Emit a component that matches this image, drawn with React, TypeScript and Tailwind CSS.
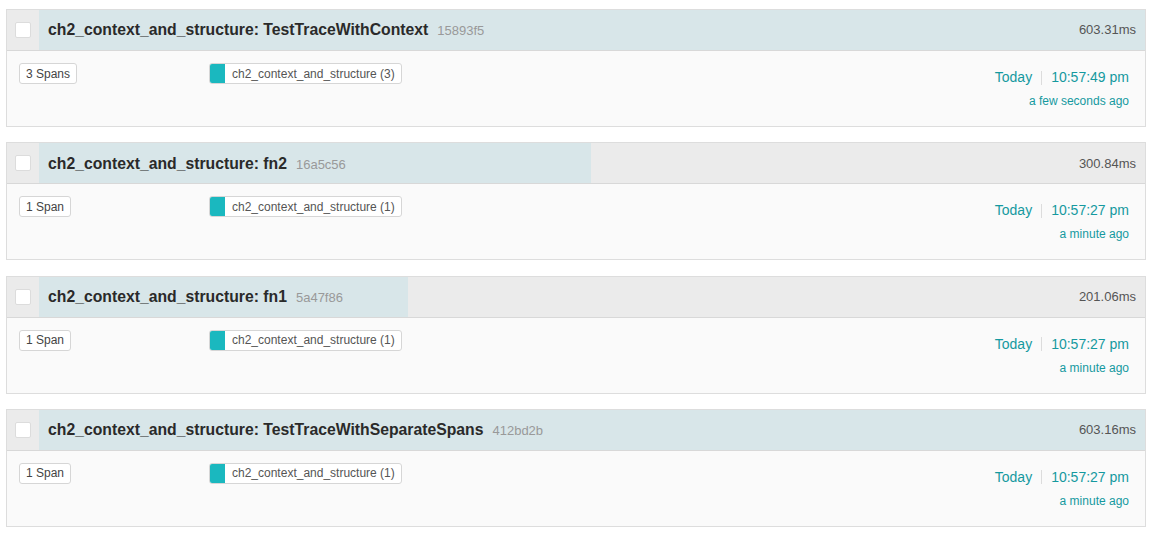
import React from 'react';

type Trace = {
  name: string;
  id: string;
  duration: number;
  spans: string;
  service: string;
  time: string;
  ago: string;
};

const traces: Trace[] = [
  { name: 'ch2_context_and_structure: TestTraceWithContext', id: '15893f5', duration: 603.31, spans: '3 Spans', service: 'ch2_context_and_structure (3)', time: '10:57:49 pm', ago: 'a few seconds ago' },
  { name: 'ch2_context_and_structure: fn2', id: '16a5c56', duration: 300.84, spans: '1 Span', service: 'ch2_context_and_structure (1)', time: '10:57:27 pm', ago: 'a minute ago' },
  { name: 'ch2_context_and_structure: fn1', id: '5a47f86', duration: 201.06, spans: '1 Span', service: 'ch2_context_and_structure (1)', time: '10:57:27 pm', ago: 'a minute ago' },
  { name: 'ch2_context_and_structure: TestTraceWithSeparateSpans', id: '412bd2b', duration: 603.16, spans: '1 Span', service: 'ch2_context_and_structure (1)', time: '10:57:27 pm', ago: 'a minute ago' },
];

const maxDuration = 603.31;

function TraceCard({ t }: { t: Trace }) {
  const pct = Math.min(100, (t.duration / maxDuration) * 100);
  return (
    <div className="border border-[#dddddd] bg-[#fafafa]">
      <div className="flex h-[41px] border-b border-[#d8d8d8] bg-[#ebebeb]">
        <div className="flex w-[32px] shrink-0 items-center pl-[8px]">
          <div className="h-[16px] w-[16px] rounded-[2px] border border-[#dcdcdc] bg-white" />
        </div>
        <div className="relative flex flex-1 items-center justify-between">
          <div className="absolute inset-y-0 left-0 bg-[#d8e6e9]" style={{ width: `${pct}%` }} />
          <div className="relative flex items-baseline pl-[9px]">
            <span className="text-[15.75px] font-bold text-[#2a2a2a]">{t.name}</span>
            <span className="ml-[9px] text-[13px] text-[#999]">{t.id}</span>
          </div>
          <span className="relative pr-[9px] text-[13px] text-[#555]">{t.duration.toFixed(2)}ms</span>
        </div>
      </div>
      <div className="flex h-[75px] items-start pl-[12px] pr-[16px] pt-[12px]">
        <div className="flex w-[190px] shrink-0">
          <div className="flex h-[21px] items-center rounded-[3px] border border-[#d6d6d6] bg-white px-[6px] text-[12px] text-[#444]">
            {t.spans}
          </div>
        </div>
        <div className="flex flex-1">
          <div className="flex h-[21px] items-center overflow-hidden rounded-[3px] border border-[#d6d6d6] bg-white text-[12px] text-[#555]">
            <span className="h-full w-[15px] bg-[#1ab8bf]" />
            <span className="pl-[7px] pr-[6px]">{t.service}</span>
          </div>
        </div>
        <div className="flex flex-col items-end pt-[4px]">
          <div className="flex items-center text-[14px] text-[#15999f]">
            <span>Today</span>
            <span className="mx-[9px] h-[14px] w-px bg-[#dcdcdc]" />
            <span>{t.time}</span>
          </div>
          <div className="mt-[4px] text-[12px] text-[#15999f]">{t.ago}</div>
        </div>
      </div>
    </div>
  );
}

export default function App() {
  return (
    <div className="min-h-[533px] bg-white px-[6px] pt-[9px] font-['Liberation_Sans',Arial,sans-serif]">
      <div className="flex w-[1140px] flex-col gap-[15.33px]">
        {traces.map((t) => (
          <TraceCard key={t.id} t={t} />
        ))}
      </div>
    </div>
  );
}
